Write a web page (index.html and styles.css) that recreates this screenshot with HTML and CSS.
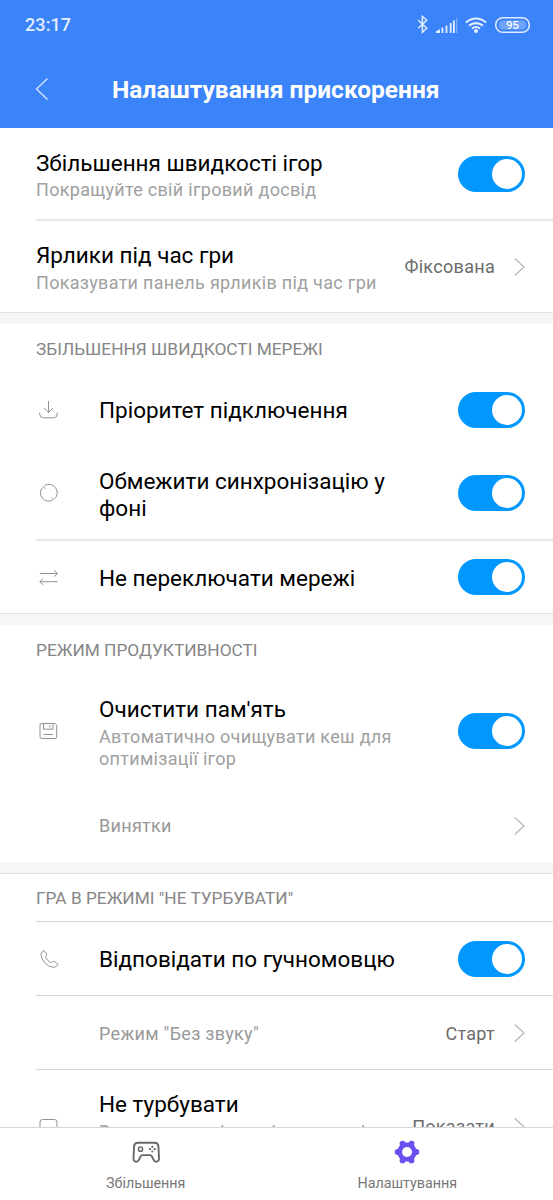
FILE: index.html
```html
<!DOCTYPE html>
<html lang="uk">
<head>
<meta charset="utf-8">
<title>Налаштування прискорення</title>
<link rel="stylesheet" href="styles.css">
</head>
<body>
<div class="screen">
  <header class="header">
    <div class="status">
      <span class="clock">23:17</span>
      <svg class="status-icons" width="114" height="22" viewBox="0 0 114 22" fill="none" stroke="#e3edff">
        <path d="M2.200 7.200l8.600 8.100-4.400 4V3.300l4.400 3.900-8.600 8.100" stroke-width="1.500"/>
        <g fill="#e3edff" stroke="none">
          <path d="M20 20v-1.800l4-2V20z"/><path d="M25.700 14.500h1.800V20h-1.800zM29.800 12.500h1.800V20h-1.800zM34 10h1.800v10H34z" transform="translate(-.2)"/>
          <path d="M37 7.500h1.800V20H37z"/><path d="M39.900 5h1.400v15h-1.400z" opacity=".4"/>
          <circle cx="60" cy="18" r="2"/>
        </g>
        <path d="M49.800 9.500q10.200-8 20.400 0M53 12.700q7-5.300 14 0M56 15.500q4-3 8 0" stroke-width="2.100"/>
        <rect x="79.700" y="4.700" width="33.600" height="14.600" rx="7.300" stroke-width="1.500"/>
        <rect x="83" y="7.500" width="27" height="9" rx="4" fill="#6fa3fb" stroke="none"/>
        <text class="battery" x="96.500" y="16">95</text>
      </svg>
    </div>
    <div class="titlebar">
      <svg class="back" width="14" height="24" viewBox="0 0 14 24"><path d="M12.500 1.500L1.500 12l11 10.500" fill="none" stroke="#d9e6ff" stroke-width="1.300"/></svg>
      <h1 class="title">Налаштування прискорення</h1>
    </div>
  </header>

  <main class="content">
    <section>
      <div class="row row-first">
        <div class="label described"><div class="name">Збільшення швидкості ігор</div><div class="desc">Покращуйте свій ігровий досвід</div></div>
        <span class="toggle"></span>
      </div>
      <div class="row row-shortcuts line-top">
        <div class="label described"><div class="name">Ярлики під час гри</div><div class="desc">Показувати панель ярликів під час гри</div></div>
        <span class="value">Фіксована</span>
        <svg class="chev" width="11" height="18" viewBox="0 0 11 18"><path d="M.8.500L10 9 .8 17.500"/></svg>
      </div>
    </section>
    <div class="band band-top"></div>

    <section>
      <h2 class="caption cap-low">ЗБІЛЬШЕННЯ ШВИДКОСТІ МЕРЕЖІ</h2>
      <div class="row row-priority">
        <svg class="icon" width="20" height="20" viewBox="0 0 20 20"><path d="M9.500 1v11.500M5 8l4.500 4.500L14 8M.7 12.500v1.500q0 3.800 3.800 3.800h10q3.800 0 3.800-3.800v-1.500"/></svg>
        <div class="label"><div class="name">Пріоритет підключення</div></div>
        <span class="toggle"></span>
      </div>
      <div class="row row-sync">
        <svg class="icon" width="20" height="20" viewBox="0 0 20 20"><path d="M5.500 2.600A8.400 8.400 0 0 1 16 15.500M3.300 4.500A8.400 8.400 0 0 0 13.500 17.300M3.800 3.300l2.800 2.400M12.600 14.700l2.800 2.400"/></svg>
        <div class="label"><div class="name">Обмежити синхронізацію у фоні</div></div>
        <span class="toggle"></span>
      </div>
      <div class="row row-switch line-top">
        <svg class="icon" width="20" height="20" viewBox="0 0 20 20"><path d="M.8 6.500h17.700M15 3.300l3.500 3.200L15 9.700M18.500 14.700H.8M4.300 11.500L.8 14.700l3.500 3.200"/></svg>
        <div class="label"><div class="name">Не переключати мережі</div></div>
        <span class="toggle"></span>
      </div>
    </section>
    <div class="band band-top"></div>

    <section>
      <h2 class="caption cap-low">РЕЖИМ ПРОДУКТИВНОСТІ</h2>
      <div class="row row-memory">
        <svg class="icon" width="20" height="20" viewBox="0 0 20 20"><path d="M3 2.500h13l1.700 1.700v11.600q0 1.700-1.700 1.700H2.700Q1 17.500 1 15.800V4.200q0-1.700 2-1.700zM4.500 2.500v5.700h9.500V2.500M11 4v2.500M4.500 13.500h9.500"/></svg>
        <div class="label described"><div class="name">Очистити пам'ять</div><div class="desc">Автоматично очищувати кеш для оптимізації ігор</div></div>
        <span class="toggle"></span>
      </div>
      <div class="row row-except">
        <span class="icon"></span>
        <div class="label"><div class="muted">Винятки</div></div>
        <svg class="chev" width="11" height="18" viewBox="0 0 11 18"><path d="M.8.500L10 9 .8 17.500"/></svg>
      </div>
    </section>
    <div class="band band-bottom"></div>

    <section>
      <h2 class="caption cap-dnd">ГРА В РЕЖИМІ "НЕ ТУРБУВАТИ"</h2>
      <div class="row row-speaker line-top thin">
        <svg class="icon" width="20" height="20" viewBox="0 0 20 20"><path transform="translate(.5 .5)" d="M1.500 4.500q.7-2.500 3-3.300 1.500 1 2.500 3 .7 1.400-.6 2.200-.8.700-.2 1.700 2 3.300 4.800 5 1 .5 1.700-.4 1-1.200 2.300-.6 2.500 1.200 3.500 2.700-1.400 2.700-3.500 2.900Q8.500 18 4 11.500 1.300 7.800 1.500 4.500z"/></svg>
        <div class="label"><div class="name">Відповідати по гучномовцю</div></div>
        <span class="toggle"></span>
      </div>
      <div class="row row-silent line-top thin">
        <span class="icon"></span>
        <div class="label"><div class="muted">Режим "Без звуку"</div></div>
        <span class="value">Старт</span>
        <svg class="chev" width="11" height="18" viewBox="0 0 11 18"><path d="M.8.500L10 9 .8 17.500"/></svg>
      </div>
      <div class="row row-dnd line-top thin">
        <svg class="icon" width="20" height="20" viewBox="0 0 20 20"><rect x="1" y="2.500" width="17" height="16" rx="2.500"/></svg>
        <div class="label described"><div class="name">Не турбувати</div><div class="desc">Вимкнути дзвінки від контактів та сповіщення</div></div>
        <span class="value">Показати</span>
        <svg class="chev" width="11" height="18" viewBox="0 0 11 18"><path d="M.8.500L10 9 .8 17.500"/></svg>
      </div>
    </section>
  </main>

  <nav class="nav">
    <div class="tab">
      <svg width="30" height="24" viewBox="0 0 30 24" fill="none" stroke="#686868" stroke-width="1.900">
        <path d="M7 2.700h16.500q3.500 0 3.900 3.500L28 18q.1 3.700-2.800 3.700-1.700 0-2.600-1.900l-1.800-3.700q-.5-1-1.600-1h-7.900q-1.100 0-1.600 1l-1.800 3.700Q7 21.700 5.300 21.700q-2.900 0-2.800-3.700L3.100 6.200Q3.500 2.700 7 2.700z"/>
        <circle cx="9.500" cy="9.200" r="2.100" stroke-width="1.500"/>
        <g fill="#686868" stroke="none"><circle cx="21.300" cy="6.900" r="1.100"/><circle cx="21.300" cy="11.500" r="1.100"/><circle cx="19" cy="9.200" r="1.100"/><circle cx="23.600" cy="9.200" r="1.100"/></g>
      </svg>
      <span>Збільшення</span>
    </div>
    <div class="tab">
      <svg width="26" height="24" viewBox="0 0 26 24">
        <g fill="#6a50f0">
          <path d="M2 12L7.500 2.500h11L24 12l-5.500 9.500h-11z"/>
          <circle cx="3.600" cy="12" r="2.900"/><circle cx="22.400" cy="12" r="2.900"/>
          <circle cx="8.500" cy="3.600" r="2.900"/><circle cx="17.500" cy="3.600" r="2.900"/>
          <circle cx="8.500" cy="20.400" r="2.900"/><circle cx="17.500" cy="20.400" r="2.900"/>
        </g>
        <circle cx="13" cy="12" r="5" fill="#fff"/>
      </svg>
      <span>Налаштування</span>
    </div>
  </nav>
</div>
</body>
</html>
```

FILE: styles.css
```css
* { box-sizing: border-box; }
body { margin: 0; background: #fff; font-family: Roboto, "Noto Sans", sans-serif; color: #000; }
.screen { width: 553px; height: 1200px; display: flex; flex-direction: column; overflow: hidden; }

.header { flex: none; height: 128px; background: #3b83f9; color: #fff; }
.status { height: 50px; padding: 0 23px 0 25px; display: flex; align-items: center; justify-content: space-between; }
.clock { margin-top: -2px; font-size: 18px; font-weight: 500; letter-spacing: .1px; color: #e3edff; }
.status-icons { display: block; margin-top: -2px; }
.battery { font-size: 11.500px; font-weight: 500; fill: #fff; stroke: none; text-anchor: middle; }
.titlebar { height: 78px; display: flex; align-items: center; padding-left: 35px; }
.title { margin: 1px 0 0 63px; font-size: 24.550px; line-height: 28px; font-weight: 700; white-space: nowrap; }
.back { flex: none; }

.content { flex: 1; min-height: 0; overflow: hidden; }
.row { display: flex; align-items: center; margin-left: 36px; padding-right: 28px; }
.line-top { border-top: 2px solid #e8e8e8; }
.line-top.thin { border-top: 1px solid #d6d6d6; }
.row-first { height: 91px; }
.row-shortcuts { height: 93px; }
.row-priority { height: 75px; }
.row-sync { height: 92px; }
.row-switch { height: 74px; }
.row-memory { height: 116px; }
.row-except { height: 73px; }
.row-speaker, .row-silent { height: 74px; }
.row-dnd { height: 114px; }

.label { flex: 1; min-width: 0; }
.label.described { padding-top: 4px; }
.name { font-size: 22.500px; line-height: 27px; }
.desc { margin-top: 2px; font-size: 18px; line-height: 22px; letter-spacing: .3px; color: #a0a0a0; white-space: nowrap; }
.row-shortcuts .label { padding-top: 3px; }
.row-shortcuts .desc { margin-top: 3px; }
.row-memory .label { padding: 3px 50px 0 0; }
.row-memory .desc { margin-top: 3px; white-space: normal; }
.row-sync .label { padding: 4px 60px 0 0; }
.row-priority .label, .row-switch .label, .row-speaker .label, .row-silent .label { padding-top: 2px; }
.row-silent .value { padding-top: 1px; }
.row-dnd .label { padding-top: 2px; }
.row-dnd .desc { margin-top: 3px; white-space: normal; }
.muted { font-size: 18px; line-height: 22px; letter-spacing: .3px; color: #999; }
.value { font-size: 18px; letter-spacing: .3px; color: #6c6c6c; }
.icon { flex: none; width: 20px; height: 20px; margin: 0 40px 0 3px; fill: none; stroke: #929292; stroke-width: 1; }
.chev { flex: none; margin-left: 19px; fill: none; stroke: #b9b9b9; stroke-width: 1.300; }
.toggle { flex: none; width: 67px; height: 36px; padding: 3px; border-radius: 18px; background: #0097ff; display: flex; justify-content: flex-end; }
.toggle::after { content: ""; width: 30px; height: 30px; border-radius: 50%; background: #fff; }

.band { height: 12px; background: #f6f6f6; }
.band-top { border-top: 1px solid #e2e2e2; }
.band-bottom { border-bottom: 1px solid #e2e2e2; }
.caption { margin: 0; padding-left: 36px; height: 48px; line-height: 48px; font-size: 17.300px; font-weight: 400; color: #858585; }
.cap-low { line-height: 50px; }
.cap-dnd { height: 47px; }

.nav { flex: none; height: 73px; border-top: 1px solid #d6d6d6; background: #fff; display: flex; padding: 0 15px; }
.tab { flex: 1; display: flex; flex-direction: column; align-items: center; padding-top: 12px; gap: 9px; font-size: 14.300px; line-height: 20px; color: #777; }
.tab svg { display: block; }
```
